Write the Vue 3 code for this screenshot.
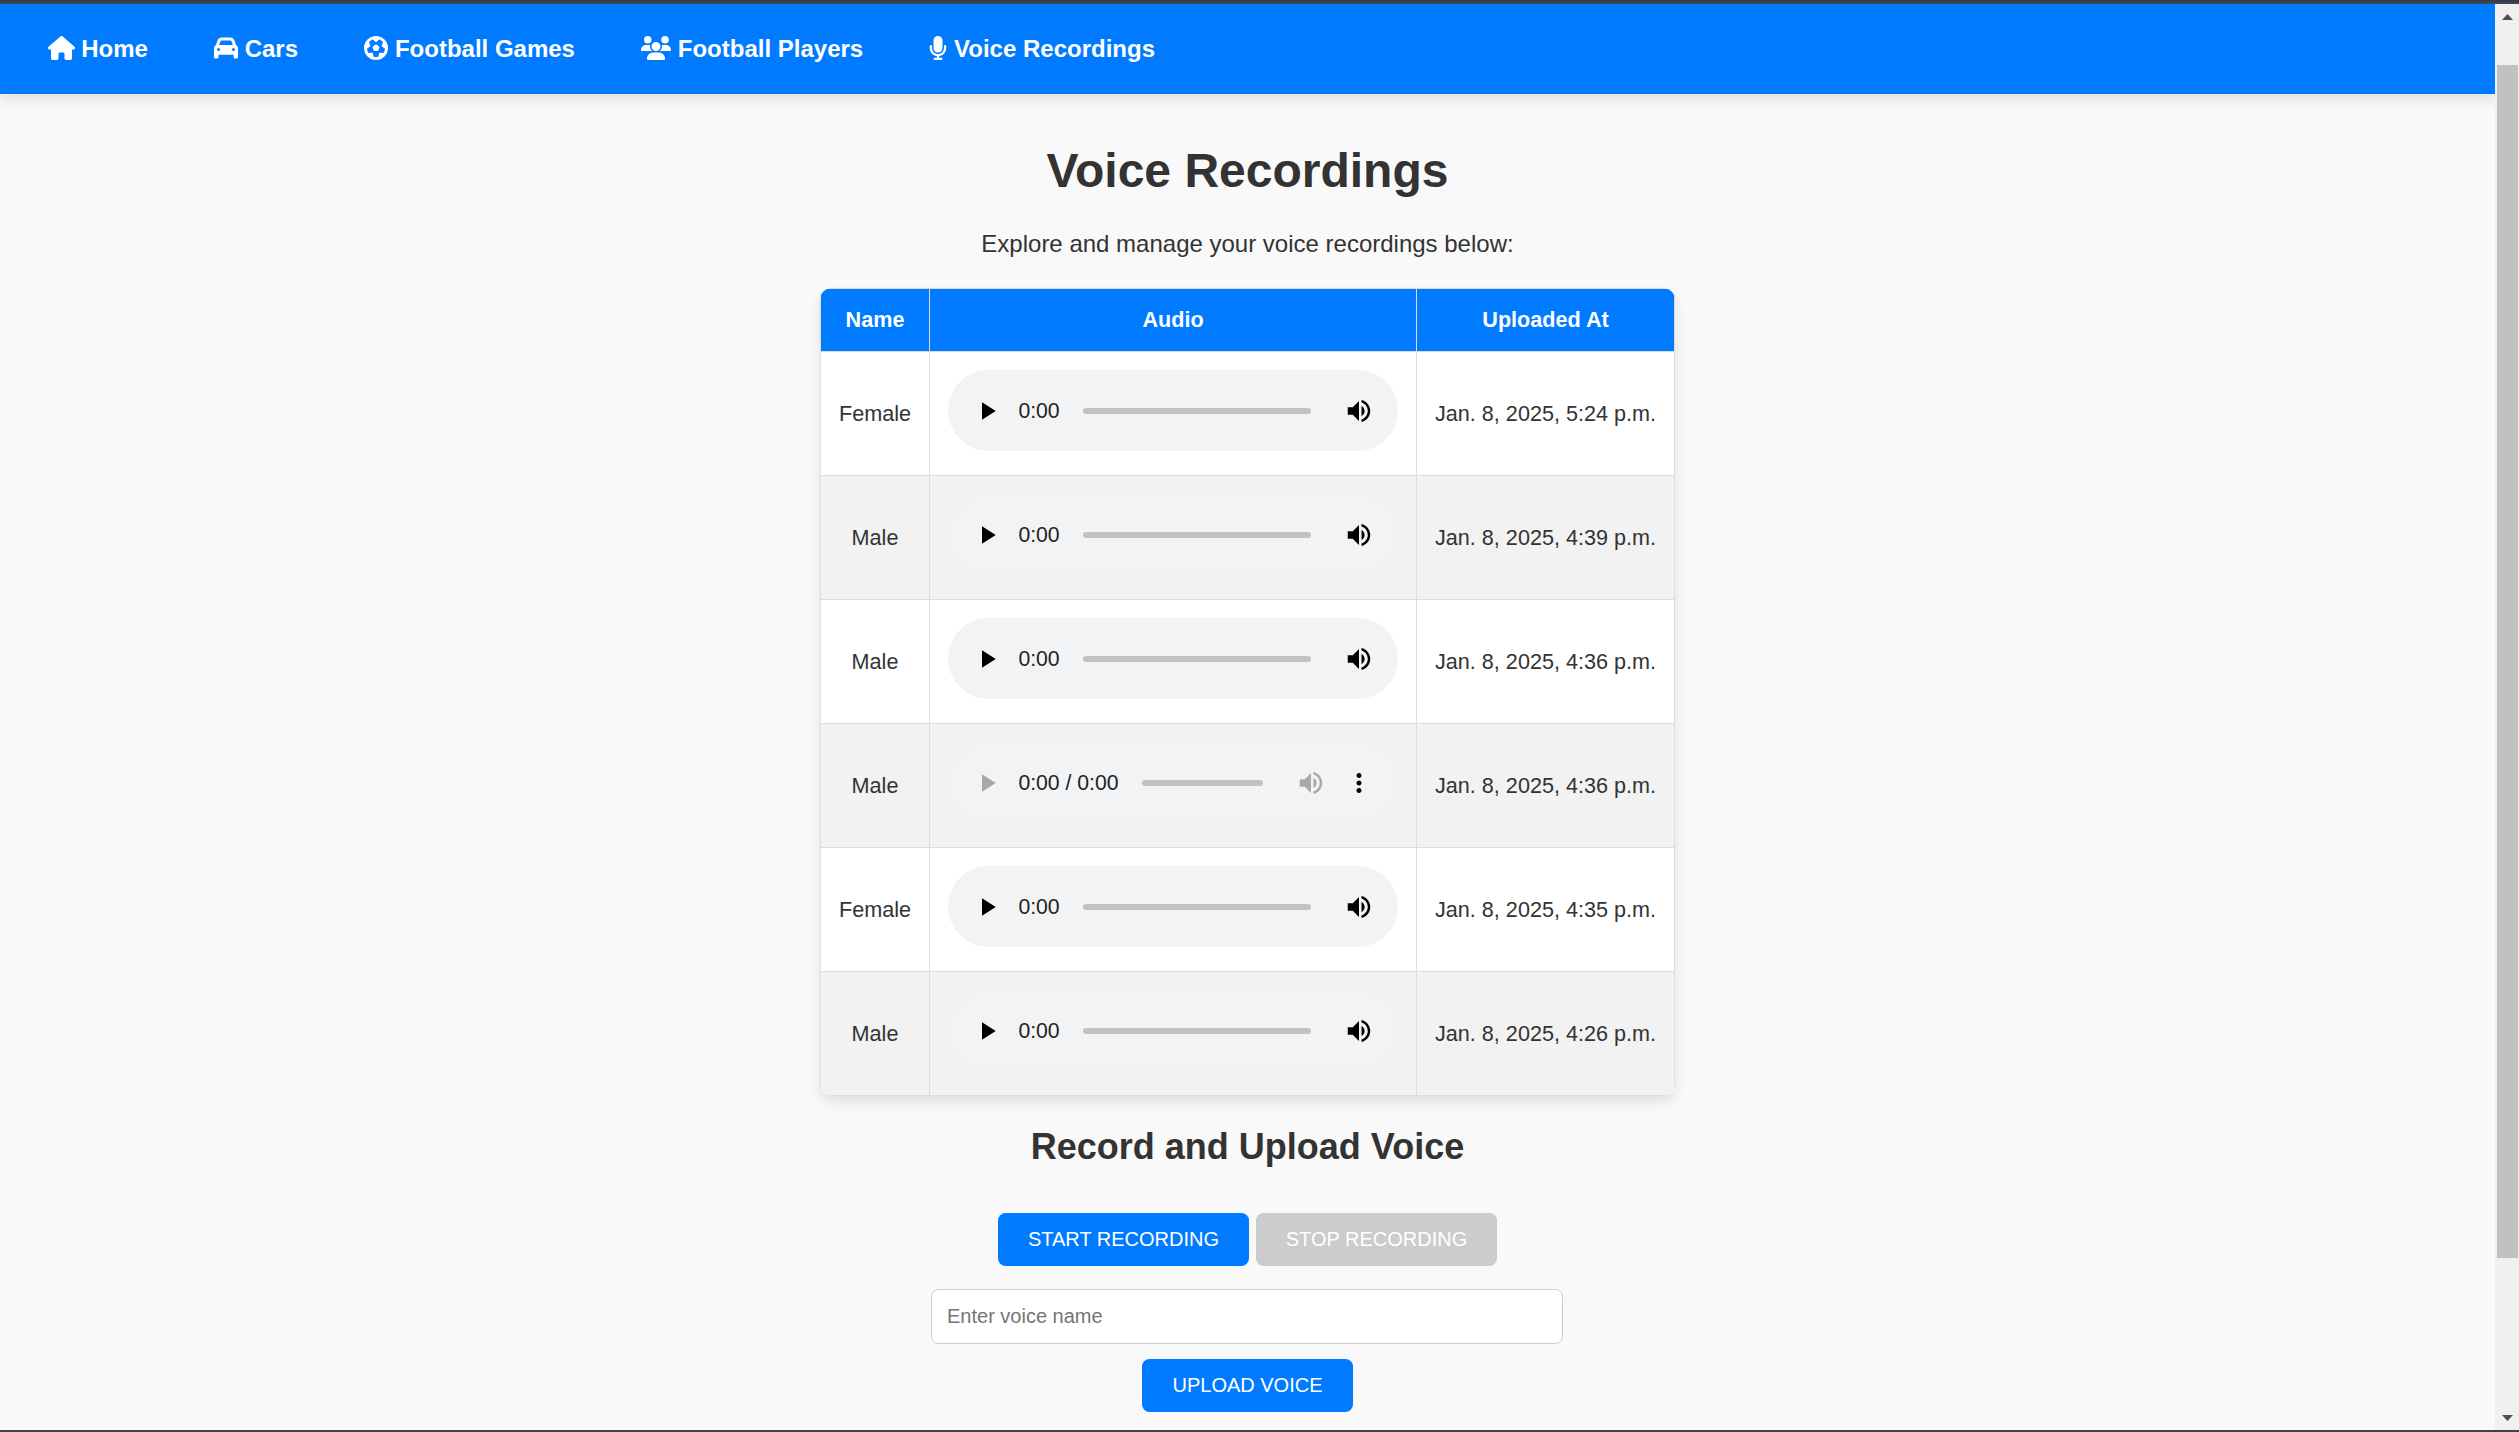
<script setup>
const navLinks = [
  {
    label: 'Home',
    w: 576,
    path: 'M575.8 255.5c0 18-15 32.1-32 32.1h-32l.7 160.2c0 2.7-.2 5.4-.5 8.1V472c0 22.1-17.9 40-40 40H456c-1.1 0-2.2 0-3.3-.1c-1.4 .1-2.8 .1-4.2 .1H416 392c-22.1 0-40-17.9-40-40V448 384c0-17.7-14.3-32-32-32H256c-17.7 0-32 14.3-32 32v64 24c0 22.1-17.9 40-40 40H160 128.1c-1.5 0-3-.1-4.5-.2c-1.2 .1-2.4 .2-3.6 .2H104c-22.1 0-40-17.9-40-40V360c0-.9 0-1.9 .1-2.8V287.6H32c-18 0-32-14-32-32.1c0-9 3-17 10-24L266.4 8c7-7 15-8 22-8s15 2 21 7L564.8 231.5c8 7 12 15 11 24z',
  },
  {
    label: 'Cars',
    w: 512,
    path: 'M135.2 117.4L109.1 192H402.9l-26.1-74.6C372.3 104.6 360.2 96 346.6 96H165.4c-13.6 0-25.7 8.6-30.2 21.4zM39.6 196.8L74.8 96.3C88.3 57.8 124.6 32 165.4 32H346.6c40.8 0 77.1 25.8 90.6 64.3l35.2 100.5c23.2 9.6 39.6 32.5 39.6 59.2V400v48c0 17.7-14.3 32-32 32H448c-17.7 0-32-14.3-32-32V400H96v48c0 17.7-14.3 32-32 32H32c-17.7 0-32-14.3-32-32V400 256c0-26.7 16.4-49.6 39.6-59.2zM128 288a32 32 0 1 0 -64 0 32 32 0 1 0 64 0zm288 32a32 32 0 1 0 0-64 32 32 0 1 0 0 64z',
  },
  {
    label: 'Football Games',
    w: 512,
    path: 'M417.3 360.1l-71.6-4.8c-5.2-.3-10.3 1.1-14.5 4.2s-7.2 7.4-8.4 12.5l-17.6 69.6C289.5 445.8 273 448 256 448s-33.5-2.2-49.2-6.4L189.2 372c-1.3-5-4.3-9.4-8.4-12.5s-9.3-4.5-14.5-4.2l-71.6 4.8c-17.6-27.2-28.5-59.2-30.4-93.6L125 228.3c4.4-2.8 7.6-7 9.2-11.9s1.4-10.2-.5-15l-26.7-66.6C128 109.2 155.3 89 186.7 76.9l55.2 46c4 3.3 9 5.1 14.1 5.1s10.2-1.8 14.1-5.1l55.2-46c31.3 12.1 58.7 32.3 79.6 57.9l-26.7 66.6c-1.9 4.8-2.1 10.1-.5 15s4.9 9.1 9.2 11.9l60.7 38.2c-1.9 34.4-12.8 66.4-30.4 93.6zM256 512A256 256 0 1 0 256 0a256 256 0 1 0 0 512zm14.1-325.7c-8.4-6.1-19.8-6.1-28.2 0L194 221c-8.4 6.1-11.9 16.9-8.7 26.8l18.3 56.3c3.2 9.9 12.4 16.6 22.8 16.6h59.2c10.4 0 19.6-6.7 22.8-16.6l18.3-56.3c3.2-9.9-.3-20.7-8.7-26.8l-47.9-34.8z',
  },
  {
    label: 'Football Players',
    w: 640,
    path: 'M144 0a80 80 0 1 1 0 160A80 80 0 1 1 144 0zM512 0a80 80 0 1 1 0 160A80 80 0 1 1 512 0zM0 298.7C0 239.8 47.8 192 106.7 192h42.7c15.9 0 31 3.5 44.6 9.7c-1.3 7.2-1.9 14.7-1.9 22.3c0 38.2 16.8 72.5 43.3 96c-.2 0-.4 0-.7 0H21.3C9.6 320 0 310.4 0 298.7zM405.3 320c-.2 0-.4 0-.7 0c26.6-23.5 43.3-57.8 43.3-96c0-7.6-.7-15-1.9-22.3c13.6-6.3 28.7-9.7 44.6-9.7h42.7C592.2 192 640 239.8 640 298.7c0 11.8-9.6 21.3-21.3 21.3H405.3zM224 224a96 96 0 1 1 192 0 96 96 0 1 1 -192 0zM128 485.3C128 411.7 187.7 352 261.3 352H378.7C452.3 352 512 411.7 512 485.3c0 14.7-11.9 26.7-26.7 26.7H154.7c-14.7 0-26.7-11.9-26.7-26.7z',
  },
  {
    label: 'Voice Recordings',
    w: 384,
    path: 'M192 0C139 0 96 43 96 96V256c0 53 43 96 96 96s96-43 96-96V96c0-53-43-96-96-96zM64 216c0-13.3-10.7-24-24-24s-24 10.7-24 24v40c0 89.1 66.2 162.7 152 174.4V464H120c-13.3 0-24 10.7-24 24s10.7 24 24 24h72 72c13.3 0 24-10.7 24-24s-10.7-24-24-24H216V430.4c85.8-11.7 152-85.3 152-174.4V216c0-13.3-10.7-24-24-24s-24 10.7-24 24v40c0 70.7-57.3 128-128 128s-128-57.3-128-128V216z',
  },
]

const recordings = [
  { name: 'Female', time: '0:00', uploaded: 'Jan. 8, 2025, 5:24 p.m.' },
  { name: 'Male', time: '0:00', uploaded: 'Jan. 8, 2025, 4:39 p.m.' },
  { name: 'Male', time: '0:00', uploaded: 'Jan. 8, 2025, 4:36 p.m.' },
  { name: 'Male', time: '0:00 / 0:00', uploaded: 'Jan. 8, 2025, 4:36 p.m.', empty: true },
  { name: 'Female', time: '0:00', uploaded: 'Jan. 8, 2025, 4:35 p.m.' },
  { name: 'Male', time: '0:00', uploaded: 'Jan. 8, 2025, 4:26 p.m.' },
]
</script>

<template>
  <div class="frame">
    <div class="viewport">
      <div class="page">
        <nav class="nav">
          <a v-for="link in navLinks" :key="link.label" class="nav-link">
            <svg :width="(link.w * 24) / 512" height="24" :viewBox="`0 0 ${link.w} 512`"><path :d="link.path" /></svg>
            <span>{{ link.label }}</span>
          </a>
        </nav>

        <main class="content">
          <h1>Voice Recordings</h1>
          <p class="intro">Explore and manage your voice recordings below:</p>

          <div class="table-card">
            <table>
              <thead>
                <tr>
                  <th class="col-name">Name</th>
                  <th class="col-audio">Audio</th>
                  <th class="col-date">Uploaded At</th>
                </tr>
              </thead>
              <tbody>
                <tr v-for="(rec, i) in recordings" :key="i">
                  <td>{{ rec.name }}</td>
                  <td>
                    <div class="player" :class="{ empty: rec.empty }">
                      <svg class="icon play" viewBox="0 0 24 24"><path d="M8 5v14l11-7z" /></svg>
                      <span class="time">{{ rec.time }}</span>
                      <div class="track"></div>
                      <svg class="icon volume" viewBox="0 0 24 24">
                        <path d="M3 9v6h4l5 5V4L7 9H3zm13.5 3c0-1.77-1.02-3.29-2.5-4.03v8.05c1.48-.73 2.5-2.25 2.5-4.02zM14 3.23v2.06c2.89.86 5 3.54 5 6.71s-2.11 5.85-5 6.71v2.06c4.01-.91 7-4.49 7-8.77s-2.99-7.86-7-8.77z" />
                      </svg>
                      <svg v-if="rec.empty" class="icon more" viewBox="0 0 24 24">
                        <path d="M12 8c1.1 0 2-.9 2-2s-.9-2-2-2-2 .9-2 2 .9 2 2 2zm0 2c-1.1 0-2 .9-2 2s.9 2 2 2 2-.9 2-2-.9-2-2-2zm0 6c-1.1 0-2 .9-2 2s.9 2 2 2 2-.9 2-2-.9-2-2-2z" />
                      </svg>
                    </div>
                  </td>
                  <td>{{ rec.uploaded }}</td>
                </tr>
              </tbody>
            </table>
          </div>

          <h2>Record and Upload Voice</h2>
          <div class="record-buttons">
            <button class="btn start">START RECORDING</button>
            <button class="btn stop" disabled>STOP RECORDING</button>
          </div>
          <input class="voice-name" type="text" placeholder="Enter voice name" />
          <button class="btn upload">UPLOAD VOICE</button>
        </main>
      </div>

      <div class="scrollbar">
        <svg class="arrow" width="11" height="6" viewBox="0 0 11 6"><path d="M5.5 0L11 6H0z" /></svg>
        <div class="thumb"></div>
        <svg class="arrow" width="11" height="6" viewBox="0 0 11 6"><path d="M0 0h11L5.5 6z" /></svg>
      </div>
    </div>
  </div>
</template>

<style>
body {
  margin: 0;
  overflow: hidden;
}
</style>

<style scoped>
.frame {
  box-sizing: border-box;
  width: 2519px;
  height: 1432px;
  border-top: 2px solid #323c4e;
  border-bottom: 2px solid #3f444b;
  font-family: 'Liberation Sans', Arial, sans-serif;
  color: #333;
}
.viewport {
  box-sizing: border-box;
  height: 1428px;
  border-top: 2px solid #43474e;
  display: flex;
  background: #f9f9f9;
}
.page {
  width: 2495px;
  overflow: hidden;
}
.nav {
  height: 90px;
  box-sizing: border-box;
  padding: 0 47.5px;
  display: flex;
  align-items: center;
  gap: 66.2px;
  background: #007bff;
  box-shadow: 0 6px 12px rgba(0, 0, 0, 0.1);
}
.nav-link {
  display: flex;
  align-items: center;
  gap: 6.67px;
  color: #fff;
  font-size: 24px;
  font-weight: bold;
  line-height: 28px;
}
.nav-link svg {
  display: block;
  fill: #fff;
  margin-bottom: 2px;
}
.content {
  display: flex;
  flex-direction: column;
  align-items: center;
}
h1 {
  margin: 49px 0 0;
  font-size: 48px;
  line-height: 56px;
}
.intro {
  margin: 31px 0 30px;
  font-size: 24px;
  line-height: 28px;
}
.table-card {
  width: 855px;
  height: 808px;
  overflow: hidden;
  border-radius: 12px;
  background: #fff;
  box-shadow: 0 6px 12px rgba(0, 0, 0, 0.1);
}
table {
  width: 855px;
  table-layout: fixed;
  border-collapse: collapse;
  font-size: 21.6px;
  text-align: center;
}
th,
td {
  box-sizing: border-box;
  border: 1px solid #ddd;
  padding: 0;
  vertical-align: middle;
}
th {
  height: 63px;
  background: #007bff;
  color: #fff;
}
td {
  height: 124px;
}
.col-name {
  width: 109px;
}
.col-audio {
  width: 487px;
}
.col-date {
  width: 258px;
}
tbody tr:nth-child(even) {
  background: #f2f2f2;
}
.player {
  box-sizing: border-box;
  width: 450px;
  height: 81px;
  margin: 0 auto 6px;
  padding: 0 24px;
  display: flex;
  align-items: center;
  border-radius: 40.5px;
  background: #f1f3f4;
}
.icon {
  width: 30px;
  height: 30px;
  flex: none;
  fill: #000;
}
.time {
  margin-left: 16.4px;
  font-size: 21.2px;
  color: #212121;
  text-shadow: 0 0 10px rgba(255, 255, 255, 0.4);
}
.track {
  flex: 1;
  height: 6px;
  margin: 0 33px 0 23.6px;
  border-radius: 3px;
  background: #c1c2c3;
}
.more {
  margin-left: 18px;
}
.empty .play,
.empty .volume {
  opacity: 0.3;
}
h2 {
  margin: 30px 0 0;
  font-size: 36px;
  line-height: 42px;
}
.record-buttons {
  display: flex;
  gap: 7px;
  margin-top: 45px;
}
.btn {
  height: 53px;
  padding: 0;
  border: none;
  border-radius: 7.5px;
  background: #007bff;
  color: #fff;
  font-family: inherit;
  font-size: 20px;
}
.start {
  width: 251px;
}
.stop {
  width: 241px;
  background: #ccc;
}
.voice-name {
  box-sizing: border-box;
  width: 632px;
  height: 55px;
  margin: 23px 1px 15px 0;
  padding: 0 15px;
  border: 1px solid #ccc;
  border-radius: 7.5px;
  background: #fff;
  font-family: inherit;
  font-size: 20px;
}
.voice-name::placeholder {
  color: #757575;
}
.upload {
  width: 211px;
}
.scrollbar {
  box-sizing: border-box;
  width: 24px;
  height: 1426px;
  padding: 10px 0 9px;
  display: flex;
  flex-direction: column;
  align-items: center;
  justify-content: space-between;
  background: #f0f0f0;
}
.thumb {
  width: 21px;
  height: 1193px;
  margin: 45px 0 157px;
  background: #c1c1c1;
}
.arrow {
  display: block;
  fill: #505050;
}
</style>
